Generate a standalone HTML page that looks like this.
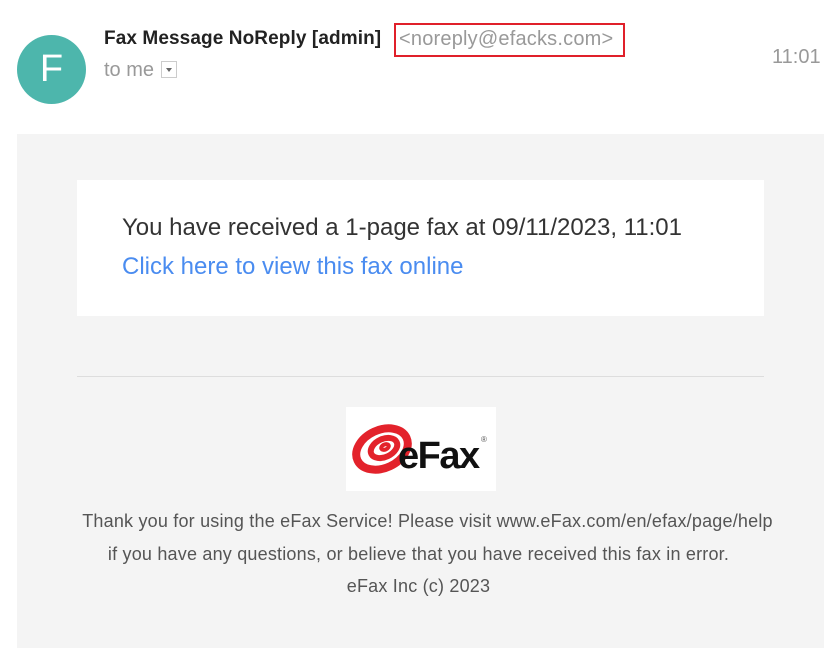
<!DOCTYPE html>
<html><head><style>
body{margin:0;width:837px;height:664px;background:#fff;font-family:"Liberation Sans",Arial,sans-serif;position:relative;overflow:hidden}
.abs{position:absolute;white-space:nowrap}
</style></head><body>
<div class="abs" style="left:17px;top:35px;width:69px;height:69px;border-radius:50%;background:#4db6ac;color:#fff;font-size:38px;line-height:69px;text-align:center">F</div>
<div class="abs" style="left:104px;top:28px;font-size:19px;color:#222;font-weight:bold;letter-spacing:0.1px">Fax Message NoReply [admin]</div>
<div class="abs" style="left:394px;top:23px;width:227px;height:30px;border:2px solid #e0202a"></div>
<div class="abs" style="left:399px;top:28px;font-size:20px;color:#999;letter-spacing:0.2px">&lt;noreply@efacks.com&gt;</div>
<div class="abs" style="left:104px;top:59px;font-size:20px;color:#999">to me</div>
<div class="abs" style="left:161px;top:61px;width:16px;height:17px;border:1px solid #ccc;box-sizing:border-box"><div style="position:absolute;left:4px;top:6px;border-left:3px solid transparent;border-right:3px solid transparent;border-top:4px solid #666"></div></div>
<div class="abs" style="left:772px;top:46px;font-size:20px;color:#999">11:01</div>
<div class="abs" style="left:17px;top:134px;width:807px;height:514px;background:#f4f4f4"></div>
<div class="abs" style="left:77px;top:180px;width:687px;height:136px;background:#fff"></div>
<div class="abs" style="left:122px;top:214px;font-size:24px;color:#333">You have received a 1-page fax at 09/11/2023, 11:01</div>
<div class="abs" style="left:122px;top:253px;font-size:24px;color:#4a8cf0">Click here to view this fax online</div>
<div class="abs" style="left:77px;top:376px;width:687px;height:1px;background:#ddd"></div>
<div class="abs" style="left:346px;top:407px;width:150px;height:84px;background:#fff">
<svg width="150" height="84" viewBox="0 0 150 84">
<g fill="none" stroke="#e3222b">
<ellipse cx="36" cy="42" rx="27" ry="19" transform="rotate(-25 36 42)" stroke-width="8"/>
<ellipse cx="38" cy="41" rx="14" ry="9" transform="rotate(-25 38 41)" stroke-width="6"/>
<ellipse cx="39" cy="40" rx="4" ry="2.5" transform="rotate(-25 39 40)" stroke-width="4"/>
</g>
<text x="52" y="61" font-family="Liberation Sans" font-weight="bold" font-size="38" fill="#111" letter-spacing="-1.5">eFax</text>
<text x="135" y="35" font-family="Liberation Sans" font-size="8" fill="#555">®</text>
</svg></div>
<div class="abs" style="left:0;width:837px;text-align:center;top:505px;font-size:18px;color:#555;line-height:32.5px;letter-spacing:0.2px">
<div style="margin-left:18px">Thank you for using the eFax Service! Please visit www.eFax.com/en/efax/page/help</div>
<div>if you have any questions, or believe that you have received this fax in error.</div>
<div>eFax Inc (c) 2023</div>
</div>
</body></html>
